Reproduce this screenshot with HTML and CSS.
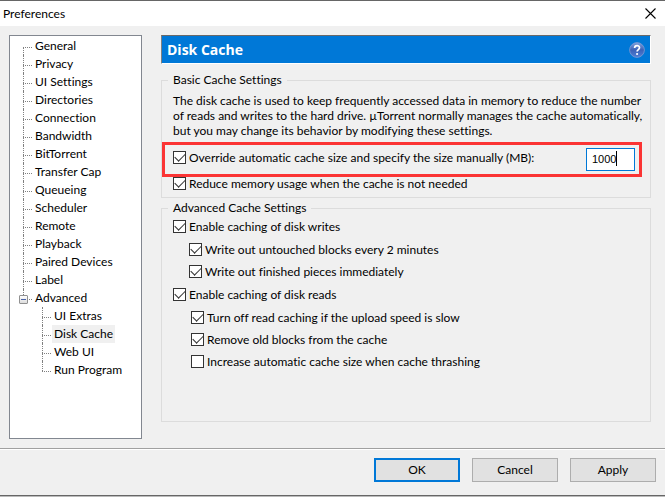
FILE: index.html
```
<!DOCTYPE html>
<html lang="en">
<head>
    <meta charset="UTF-8">
    <meta name="viewport" content="width=device-width, initial-scale=1.0">
    <title>Preferences</title>
    <link rel="stylesheet" href="styles.css">
</head>
<body>
    <div class="window">
        <header class="titlebar">
            <h1 class="titlebar-text">Preferences</h1>
            <button class="close" type="button" aria-label="Close">
                <svg width="11" height="11" viewBox="0 0 11 11"><path d="M0.5 0.5l10 10M10.5 0.5l-10 10" stroke="#000" stroke-width="1.1" fill="none"/></svg>
            </button>
        </header>

        <div class="content">
            <nav class="tree">
                <ul class="tree-list">
                    <li><a href="#">General</a></li>
                    <li><a href="#">Privacy</a></li>
                    <li><a href="#">UI Settings</a></li>
                    <li><a href="#">Directories</a></li>
                    <li><a href="#">Connection</a></li>
                    <li><a href="#">Bandwidth</a></li>
                    <li><a href="#">BitTorrent</a></li>
                    <li><a href="#">Transfer Cap</a></li>
                    <li><a href="#">Queueing</a></li>
                    <li><a href="#">Scheduler</a></li>
                    <li><a href="#">Remote</a></li>
                    <li><a href="#">Playback</a></li>
                    <li><a href="#">Paired Devices</a></li>
                    <li><a href="#">Label</a></li>
                    <li>
                        <button class="toggle" type="button" aria-label="Collapse Advanced"></button>
                        <a href="#">Advanced</a>
                        <ul class="tree-list tree-sub">
                            <li><a href="#">UI Extras</a></li>
                            <li><a href="#" class="selected">Disk Cache</a></li>
                            <li><a href="#">Web UI</a></li>
                            <li><a href="#">Run Program</a></li>
                        </ul>
                    </li>
                </ul>
            </nav>

            <main class="panel">
                <div class="panel-header">
                    <h2 class="panel-title">Disk Cache</h2>
                    <button class="help" type="button" aria-label="Help">
                        <svg width="16" height="16" viewBox="0 0 16 16">
                            <defs>
                                <linearGradient id="ball" x1="0" y1="0" x2="0" y2="1">
                                    <stop offset="0" stop-color="#7fa0dc"/>
                                    <stop offset="0.5" stop-color="#3c62b8"/>
                                    <stop offset="1" stop-color="#4f7fd6"/>
                                </linearGradient>
                            </defs>
                            <circle cx="8" cy="8" r="7.4" fill="url(#ball)" stroke="#7d9bd4" stroke-width="0.8"/>
                            <path d="M5.6 6.1C5.6 2.9 10.5 2.9 10.5 5.8C10.5 7.6 8.1 7.6 8.1 9.6" fill="none" stroke="#fff" stroke-width="1.7"/>
                            <circle cx="8.1" cy="12" r="1.1" fill="#fff"/>
                        </svg>
                    </button>
                </div>

                <fieldset class="group">
                    <legend>Basic Cache Settings</legend>
                    <p class="description">The disk cache is used to keep frequently accessed data in memory to reduce the number<br>of reads and writes to the hard drive. µTorrent normally manages the cache automatically,<br>but you may change its behavior by modifying these settings.</p>
                    <div class="override">
                        <label class="check"><input type="checkbox" checked>Override automatic cache size and specify the size manually (MB):</label>
                        <span class="size-field"><input class="size" type="text" value="1000" aria-label="Cache size in MB"></span>
                    </div>
                    <label class="check check-inset"><input type="checkbox" checked>Reduce memory usage when the cache is not needed</label>
                </fieldset>

                <fieldset class="group group-advanced">
                    <legend>Advanced Cache Settings</legend>
                    <div class="options">
                        <label class="check"><input type="checkbox" checked>Enable caching of disk writes</label>
                        <div class="suboptions">
                            <label class="check"><input type="checkbox" checked>Write out untouched blocks every 2 minutes</label>
                            <label class="check"><input type="checkbox" checked>Write out finished pieces immediately</label>
                        </div>
                        <label class="check"><input type="checkbox" checked>Enable caching of disk reads</label>
                        <div class="suboptions suboptions-reads">
                            <label class="check"><input type="checkbox" checked>Turn off read caching if the upload speed is slow</label>
                            <label class="check"><input type="checkbox" checked>Remove old blocks from the cache</label>
                            <label class="check"><input type="checkbox">Increase automatic cache size when cache thrashing</label>
                        </div>
                    </div>
                </fieldset>
            </main>
        </div>

        <footer class="actions">
            <button class="btn btn-default" type="button">OK</button>
            <button class="btn" type="button">Cancel</button>
            <button class="btn" type="button">Apply</button>
        </footer>
    </div>
</body>
</html>
```

FILE: styles.css
```
:root {
    --accent: #0078d7;
    --face: #f0f0f0;
    --line: #dcdcdc;
    --dots: #808080;
}

* {
    margin: 0;
    padding: 0;
    box-sizing: border-box;
}

body {
    font-family: "Segoe UI", Lato, "Open Sans", sans-serif;
    font-size: 12px;
    font-variant-ligatures: none;
    line-height: 16px;
    color: #000;
    background: var(--face);
}

button,
input {
    font: inherit;
    color: inherit;
}

.window {
    display: flex;
    flex-direction: column;
    min-height: 100vh;
    border-top: 1px solid #666;
    border-bottom: 1px solid #bbb;
}

.titlebar {
    display: flex;
    align-items: center;
    justify-content: space-between;
    height: 25px;
    padding: 0 9px 0 3px;
    background: #fff;
}

.titlebar-text {
    font-size: 12px;
    font-weight: 400;
}

.close,
.help {
    display: flex;
    border: none;
    background: none;
}

.content {
    flex: 1;
    display: flex;
    gap: 19px;
    padding: 9px 14px 9px 9px;
}

/* Category tree */
.tree {
    flex: none;
    width: 133px;
    padding: 1px 0 0 13px;
    border: 1px solid #828790;
    background: #fff;
}

.tree-list {
    list-style: none;
}

.tree-list li {
    position: relative;
    padding-left: 10px;
    line-height: 18px;
}

.tree-list li::before {
    content: "";
    position: absolute;
    left: 0;
    top: 0;
    height: 100%;
    border-left: 1px dotted var(--dots);
}

.tree-list li::after {
    content: "";
    position: absolute;
    left: 0;
    top: 10px;
    width: 9px;
    border-top: 1px dotted var(--dots);
}

.tree-list li:first-child::before {
    top: 10px;
    height: 8px;
}

.tree-list li:last-child::before {
    height: 10px;
}

.tree-list .tree-sub li:first-child::before {
    top: 0;
    height: 100%;
}

.tree-sub {
    padding-left: 9px;
}

.tree a {
    display: inline-block;
    padding: 0 2px;
    color: inherit;
    text-decoration: none;
}

.tree .selected {
    background: var(--face);
}

.toggle {
    position: absolute;
    z-index: 1;
    left: -4px;
    top: 6px;
    width: 9px;
    height: 9px;
    border: 1px solid #919191;
    border-radius: 1px;
    background: linear-gradient(#4b63a7, #4b63a7) center / 5px 1px no-repeat, linear-gradient(#fff, #ddd);
}

/* Right side */
.panel {
    flex: 1;
    display: flex;
    flex-direction: column;
    min-width: 0;
    margin-bottom: 17px;
}

.panel-header {
    display: flex;
    align-items: center;
    justify-content: space-between;
    height: 29px;
    padding: 0 5px 0;
    border: 1px solid;
    border-color: #696969 #fff #fff #808080;
    background: var(--accent);
    color: #fff;
}

.panel-title {
    font-family: "Segoe UI", "Open Sans", sans-serif;
    font-size: 14px;
    font-weight: 700;
}

.group {
    min-width: 0;
    margin-top: 8px;
    padding-bottom: 7px;
    border: 1px solid var(--line);
}

.group legend {
    margin-left: 6px;
    padding: 0 5px;
}

.description {
    padding: 5px 0 4px 11px;
    line-height: 15px;
    white-space: nowrap;
}

.check {
    display: flex;
    align-items: center;
    gap: 3px;
    line-height: 13px;
    white-space: nowrap;
}

.check input {
    appearance: none;
    position: relative;
    flex: none;
    width: 13px;
    height: 13px;
    border: 1px solid #333;
    background: #fff;
}

.check input:checked::after {
    content: "";
    position: absolute;
    left: 1px;
    top: 1px;
    width: 9px;
    height: 5px;
    border-left: 1px solid #333;
    border-bottom: 1px solid #333;
    transform: rotate(-45deg);
}

.check-inset {
    padding-left: 11px;
}

.override {
    display: flex;
    justify-content: space-between;
    align-items: flex-start;
    height: 35px;
    margin-right: 8px;
    padding: 3px 4px 3px 8px;
    border: 3px solid #fb3434;
}

.override .check {
    padding-top: 3px;
}

.size-field {
    position: relative;
}

.size {
    display: block;
    width: 49px;
    height: 23px;
    padding: 0 5px 2px;
    border: 1px solid var(--accent);
    background: #fff;
    font-family: "Segoe UI", "Liberation Sans", sans-serif;
    font-size: 11px;
    outline: none;
}

/* text cursor */
.size-field::after {
    content: "";
    position: absolute;
    left: 30px;
    top: 3px;
    width: 1px;
    height: 15px;
    background: #000;
}

.group-advanced {
    flex: 1;
    margin-top: 2px;
}

.options {
    display: flex;
    flex-direction: column;
    gap: 10px;
    padding: 4px 0 0 11px;
}

.suboptions {
    display: flex;
    flex-direction: column;
    gap: 9px;
    padding-left: 16px;
}

.suboptions-reads {
    padding-left: 18px;
}

.actions {
    display: flex;
    justify-content: flex-end;
    gap: 12px;
    padding: 9px 9px 13px;
    border-top: 1px solid #a0a0a0;
    border-bottom: 1px solid #666;
    box-shadow: inset 0 1px #fff;
}

.btn {
    width: 86px;
    height: 24px;
    border: 1px solid #adadad;
    background: #e1e1e1;
}

.btn-default {
    border: 2px solid var(--accent);
}
```
